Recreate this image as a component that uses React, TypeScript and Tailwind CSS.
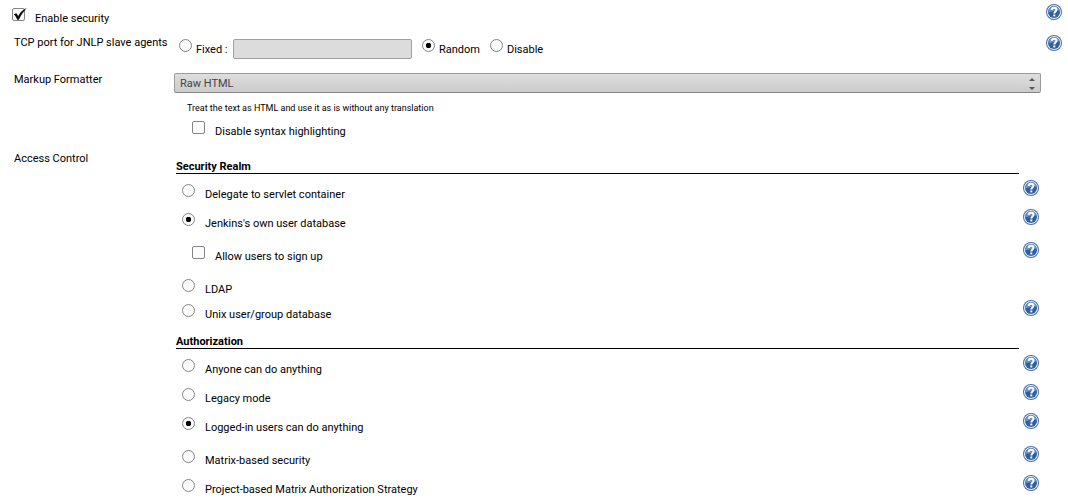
import { useId, type ReactNode } from "react";

function HelpButton({ topic }: { topic: string }) {
  return (
    <button type="button" aria-label={`Help for ${topic}`} className="block size-4 shrink-0 cursor-pointer">
      <svg viewBox="0 0 16 16" className="block size-4">
        <circle cx="8" cy="8" r="8" fill="#456fa9" />
        <circle cx="8" cy="8" r="7" fill="#eef3fa" />
        <circle cx="8" cy="8" r="6" fill="#2f5f9f" />
        <path d="M2.2 8.6A5.8 5.8 0 0 1 13.6 6.6C10.5 6.2 6.5 7 2.2 8.6Z" fill="#6d93c5" />
        <path
          d="M5.7 5.9C5.8 4.4 6.8 3.7 8.1 3.7c1.4 0 2.4.8 2.4 2 0 1.7-2.2 1.8-2.2 3.7"
          fill="none"
          stroke="#fff"
          strokeWidth="1.9"
        />
        <rect x="7.3" y="10.5" width="2" height="1.9" fill="#fff" />
      </svg>
    </button>
  );
}

function Radio({ id, name, checked }: { id: string; name: string; checked?: boolean }) {
  return (
    <input
      id={id}
      type="radio"
      name={name}
      defaultChecked={checked}
      className="size-[13px] shrink-0 appearance-none rounded-full border border-[#858585] bg-[#fbfbfb] checked:bg-[radial-gradient(circle,#080808_2.5px,transparent_3px)]"
    />
  );
}

function Checkbox({ id, checked }: { id: string; checked?: boolean }) {
  return (
    <span className="relative block size-[13px] shrink-0">
      <input
        id={id}
        type="checkbox"
        defaultChecked={checked}
        className="peer block size-[13px] appearance-none rounded-xs border border-[#858585] bg-[#fbfbfb]"
      />
      <svg
        viewBox="0 0 15 13"
        className="pointer-events-none invisible absolute top-0 left-0 h-[13px] w-[15px] peer-checked:visible"
      >
        <path d="M1.8 6.3L4.4 5.2L6.2 8C8.2 4.4 10.6 1.6 14.8 0C11.5 3.5 9 7.4 6.8 11.8H5.2C4.4 9.5 3.4 7.8 1.8 6.3Z" fill="#0c0c0c" />
      </svg>
    </span>
  );
}

type OptionProps = { label: string; checked?: boolean; help?: boolean; className?: string };

function OptionRow({ label, help, className = "", children }: OptionProps & { children: (id: string) => ReactNode }) {
  const id = useId();
  return (
    <div className={`flex h-6 items-start gap-1 ${className}`}>
      <div className="flex flex-1 items-start gap-2.5">
        <div className="pt-1">{children(id)}</div>
        <label htmlFor={id} className="pt-1.5">
          {label}
        </label>
      </div>
      {help && <HelpButton topic={label} />}
    </div>
  );
}

function CheckOption(props: OptionProps) {
  return <OptionRow {...props}>{(id) => <Checkbox id={id} checked={props.checked} />}</OptionRow>;
}

function RadioOption({ name, ...props }: OptionProps & { name: string }) {
  return (
    <OptionRow {...props}>
      {(id) => (
        <span className="flex">
          <Radio id={id} name={name} checked={props.checked} />
        </span>
      )}
    </OptionRow>
  );
}

function Group({ title, children }: { title: string; children: ReactNode }) {
  return (
    <section>
      <h2 className="mr-5 border-b border-black leading-[13px] font-bold">{title}</h2>
      <div className="pt-1.5 pl-1.5">{children}</div>
    </section>
  );
}

export default function App() {
  return (
    <form className="bg-white pt-1 pr-1.5 pb-1 pl-3 font-['Roboto','Noto_Sans',sans-serif] text-[11px] leading-[18px] text-black">
      <CheckOption label="Enable security" checked help />

      <div className="mt-1.5 flex items-start pl-0.5">
        <div className="w-40 shrink-0">TCP port for JNLP slave agents</div>
        <div role="radiogroup" aria-label="TCP port for JNLP slave agents" className="flex flex-1 items-start gap-2.5 pt-[5px] pl-[5px]">
          <div className="flex items-start gap-1">
            <Radio id="port-fixed" name="port" />
            <label htmlFor="port-fixed" className="w-[33px] pt-0.5">
              Fixed :
            </label>
            <input
              type="text"
              disabled
              aria-label="Fixed port"
              className="h-5 w-[179px] rounded-xs border border-[#a0a0a0] bg-[#dcdcdc] px-1"
            />
          </div>
          <div className="flex items-start gap-1">
            <Radio id="port-random" name="port" checked />
            <label htmlFor="port-random" className="pt-0.5">
              Random
            </label>
          </div>
          <div className="flex items-start gap-1">
            <Radio id="port-disable" name="port" />
            <label htmlFor="port-disable" className="pt-0.5">
              Disable
            </label>
          </div>
        </div>
        <div className="pt-px">
          <HelpButton topic="TCP port" />
        </div>
      </div>

      <div className="mt-3 flex items-start pr-[21px] pl-0.5">
        <label htmlFor="formatter" className="w-40 shrink-0">
          Markup Formatter
        </label>
        <div className="flex-1 pt-0.5">
          <div className="relative">
            <select
              id="formatter"
              className="block h-5 w-full appearance-none rounded-xs border border-[#9b9b9b] border-b-[#858585] bg-linear-to-b from-[#dedede] to-[#cbcbcb] px-[5px] pt-px text-[#444444]"
            >
              <option>Raw HTML</option>
            </select>
            <svg viewBox="0 0 6 13" className="pointer-events-none absolute top-1 right-1.5 h-[13px] w-1.5">
              <path d="M0 4L3 1L6 4ZM0 10H6L3 13Z" fill="#555" />
            </svg>
          </div>
          <p className="mt-1.5 pl-[13px] text-[9px] leading-[18px]">
            Treat the text as HTML and use it as is without any translation
          </p>
          <CheckOption label="Disable syntax highlighting" className="pl-[18px]" />
        </div>
      </div>

      <div className="mt-[9px] flex items-start pr-[23px] pl-0.5">
        <div className="w-40 shrink-0">Access Control</div>
        <div className="flex flex-1 flex-col gap-[11px] pt-2.5 pl-0.5">
          <Group title="Security Realm">
            <RadioOption name="realm" label="Delegate to servlet container" help className="mb-[5px]" />
            <RadioOption name="realm" label="Jenkins's own user database" checked help className="mb-[9px]" />
            <CheckOption label="Allow users to sign up" help className="mb-[9px] pl-2.5" />
            <RadioOption name="realm" label="LDAP" className="mb-px" />
            <RadioOption name="realm" label="Unix user/group database" help />
          </Group>
          <Group title="Authorization">
            <RadioOption name="authorization" label="Anyone can do anything" help className="mb-[5px]" />
            <RadioOption name="authorization" label="Legacy mode" help className="mb-[5px]" />
            <RadioOption name="authorization" label="Logged-in users can do anything" checked help className="mb-[9px]" />
            <RadioOption name="authorization" label="Matrix-based security" help className="mb-[5px]" />
            <RadioOption name="authorization" label="Project-based Matrix Authorization Strategy" help />
          </Group>
        </div>
      </div>
    </form>
  );
}
